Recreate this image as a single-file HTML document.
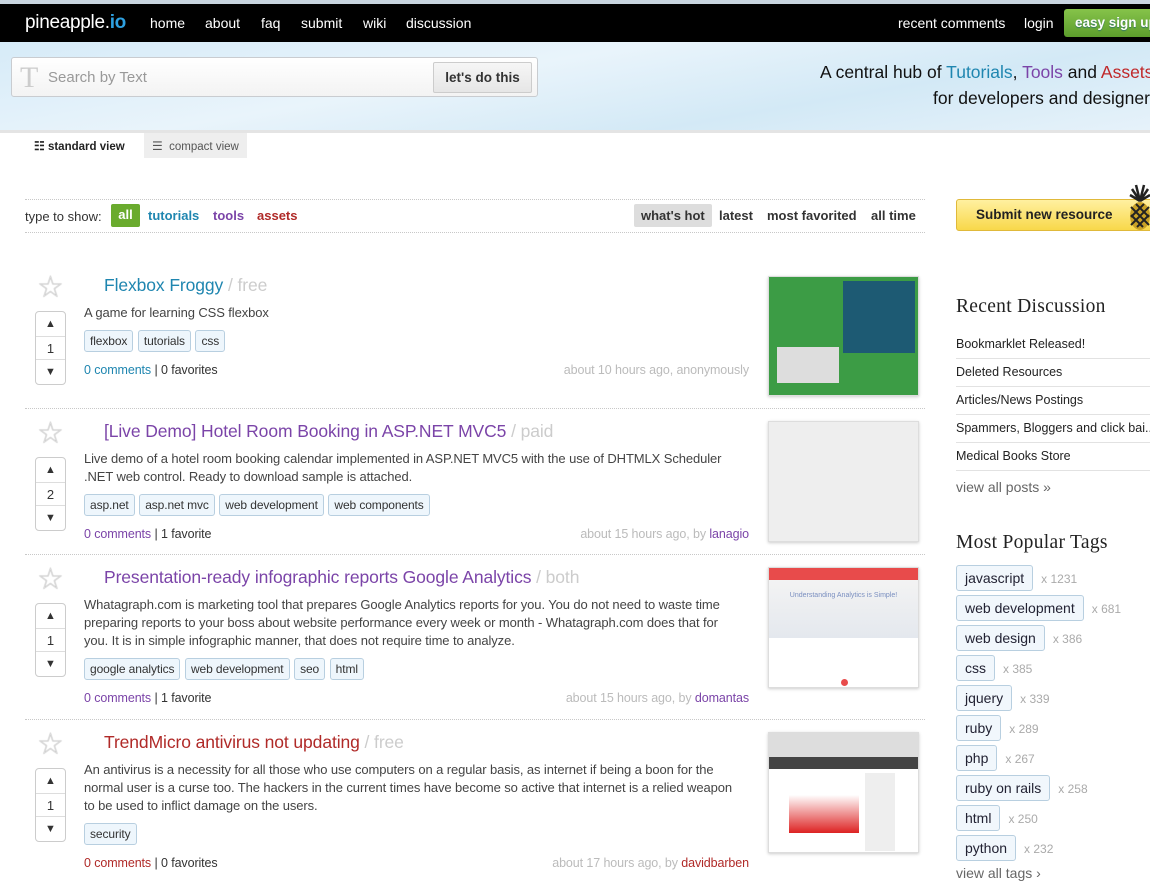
<!DOCTYPE html>
<html><head><meta charset="utf-8"><style>
*{margin:0;padding:0;box-sizing:border-box}
body{width:1150px;height:881px;overflow:hidden;background:#fff;font-family:"Liberation Sans",Arial,sans-serif;color:#333;position:relative}
.abs{position:absolute}
#top{left:0;top:0;width:1150px;height:4px;background:#c9d5e0}
#nav{left:0;top:4px;width:1150px;height:38px;background:#000;color:#fff;font-size:14px}
#nav span{position:absolute;top:11px}
#hero{left:0;top:42px;width:1150px;height:88px;background:linear-gradient(170deg,#d6ebf8 0%,#e9f4fb 40%,#d3e9f6 70%,#e6f2fa 100%)}
#hero2{left:0;top:130px;width:1150px;height:3px;background:#e4e4e4}
#search{left:11px;top:57px;width:527px;height:40px;border:1px solid #c9ccd0;border-radius:3px;background:linear-gradient(#fff,#f3f3f3)}
.dot{height:0;border-top:1px dotted #c8c8c8}
.post{position:absolute;left:0;width:930px}
.star{position:absolute;left:37px;top:4px;font-size:30px;color:#ddd;line-height:26px;text-shadow:0 0 1px #999}
.vote{position:absolute;left:35px;top:40px;width:31px;height:74px;border:1px solid #ccc;border-radius:4px;background:#fff;font-size:13px;text-align:center}
.vote div{height:24px;line-height:24px;font-size:11px}
.vote .n{border-top:1px solid #ddd;border-bottom:1px solid #ddd;font-size:13px;height:24px}
.c{position:absolute;left:84px;top:0;width:665px;font-size:13px;letter-spacing:-0.1px}
.t{padding-left:20px;font-size:17.5px;line-height:28px;letter-spacing:-0.1px}
.t i{font-style:normal;color:#ccc}
.d{margin-top:5px;line-height:18px;color:#444;white-space:nowrap}
.tags{margin-top:8px;height:22px}
.tag{display:inline-block;height:22px;line-height:20px;padding:0 5px;border:1px solid #b8cfe0;border-radius:3px;background:#eef6fc;font-size:12px;color:#333;margin-right:1px}
.m{margin-top:9px;line-height:18px;font-size:12.5px;position:relative}
.m .r{position:absolute;right:0;top:0;color:#bbb}
.th{position:absolute;left:768px;width:151px;border:1px solid #ddd;box-shadow:0 1px 3px #ccc}
.side{left:956px;font-size:12.5px}
.h{font-family:"Liberation Serif",serif;font-size:19.5px;color:#222;letter-spacing:.3px}
.dl{width:194px;height:28px;line-height:27px;border-bottom:1px solid #e2e2e2;white-space:nowrap;overflow:hidden;color:#222}
.pt{height:30px;position:relative}
.pt b{font-weight:normal;display:inline-block;height:26px;line-height:24px;padding:0 8px;border:1px solid #b8cfe0;border-radius:3px;background:#f1f7fc;font-size:14px;color:#223}
.pt span{color:#aaa;font-size:12px;margin-left:8px}
.f{position:absolute;top:208px;font-size:13px;font-weight:bold;color:#333}
</style></head><body>
<div id="top" class="abs"></div>
<div id="nav" class="abs">
<span style="left:25px;top:8px;font-size:19px;letter-spacing:-.3px">pineapple.<b style="color:#2ea0e0">io</b></span>
<span style="left:150px">home</span><span style="left:205px">about</span><span style="left:261px">faq</span><span style="left:301px">submit</span><span style="left:363px">wiki</span><span style="left:406px">discussion</span>
<span style="left:898px">recent comments</span><span style="left:1024px">login</span>
<div class="abs" style="left:1064px;top:5px;width:90px;height:28px;background:linear-gradient(#86c34a,#5c9d2c);border-radius:3px;font-weight:bold;font-size:13.5px;line-height:28px;padding-left:11px;white-space:nowrap;text-shadow:0 1px 1px #376"> easy sign up</div>
</div>
<div id="hero" class="abs"></div><div id="hero2" class="abs"></div>
<div id="search" class="abs">
<div class="abs" style="left:8px;top:3px;font-family:'Liberation Serif',serif;font-size:30px;color:#ccc">T</div>
<div class="abs" style="left:36px;top:11px;font-size:15px;color:#999">Search by Text</div>
<div class="abs" style="left:421px;top:4px;width:99px;height:31px;border:1px solid #ccc;border-radius:2px;background:linear-gradient(#f6f6f6,#e6e6e6);font-size:13.5px;font-weight:bold;color:#333;text-align:center;line-height:30px">let's do this</div>
</div>
<div class="abs" style="left:820px;top:59px;font-size:17.5px;line-height:26px;white-space:nowrap;color:#111">A central hub of <span style="color:#1f86b0">Tutorials</span>, <span style="color:#7b44a8">Tools</span> and <span style="color:#c0282a">Assets</span></div>
<div class="abs" style="left:933px;top:85px;font-size:17.5px;line-height:26px;white-space:nowrap;color:#111">for developers and designers</div>
<div class="abs" style="left:144px;top:133px;width:103px;height:25px;background:#eee"></div>
<div class="abs" style="left:34px;top:139px;font-size:11.5px;font-weight:bold;color:#222"><span style="font-size:12px">☷</span> standard view</div>
<div class="abs" style="left:152px;top:139px;font-size:11.5px;color:#555"><span style="font-size:12px">☰</span>&nbsp; compact view</div>
<div class="abs dot" style="left:25px;top:199px;width:900px"></div>
<div class="abs dot" style="left:25px;top:232px;width:900px"></div>
<div class="abs" style="left:25px;top:209px;font-size:13px;color:#333">type to show:</div>
<div class="abs" style="left:111px;top:204px;width:29px;height:23px;background:#6aab2e;border-radius:2px;color:#fff;font-weight:bold;font-size:13px;text-align:center;line-height:22px">all</div>
<div class="abs" style="left:148px;top:208px;font-size:13px;font-weight:bold;color:#1f86b0">tutorials</div>
<div class="abs" style="left:213px;top:208px;font-size:13px;font-weight:bold;color:#7b44a8">tools</div>
<div class="abs" style="left:257px;top:208px;font-size:13px;font-weight:bold;color:#b02a28">assets</div>
<div class="abs" style="left:634px;top:204px;width:78px;height:23px;background:#ddd;border-radius:2px"></div>
<div class="f" style="left:641px">what's hot</div>
<div class="f" style="left:719px">latest</div>
<div class="f" style="left:767px">most favorited</div>
<div class="f" style="left:871px">all time</div>

<div class="post" style="top:271px">
<div class="star">☆</div>
<div class="vote"><div>▲</div><div class="n">1</div><div>▼</div></div>
<div class="c"><div class="t" style="color:#1f86b0">Flexbox Froggy <i>/ free</i></div>
<div class="d">A game for learning CSS flexbox</div>
<div class="tags"><span class="tag">flexbox</span> <span class="tag">tutorials</span> <span class="tag">css</span></div>
<div class="m"><span style="color:#1f86b0">0 comments</span> | 0 favorites<span class="r">about 10 hours ago, anonymously</span></div></div>
<div class="th" style="top:5px;height:120px;background:#3c9c45;padding:4px"><div style="position:absolute;left:74px;top:4px;width:72px;height:72px;background:#1d5a73"></div><div style="position:absolute;left:8px;top:70px;width:62px;height:36px;background:#ddd"></div></div>
</div>
<div class="abs dot" style="left:25px;top:408px;width:900px"></div>

<div class="post" style="top:417px">
<div class="star">☆</div>
<div class="vote"><div>▲</div><div class="n">2</div><div>▼</div></div>
<div class="c"><div class="t" style="color:#7b44a8">[Live Demo] Hotel Room Booking in ASP.NET MVC5 <i>/ paid</i></div>
<div class="d">Live demo of a hotel room booking calendar implemented in ASP.NET MVC5 with the use of DHTMLX Scheduler<br>.NET web control. Ready to download sample is attached.</div>
<div class="tags"><span class="tag">asp.net</span> <span class="tag">asp.net mvc</span> <span class="tag">web development</span> <span class="tag">web components</span></div>
<div class="m"><span style="color:#7b44a8">0 comments</span> | 1 favorite<span class="r">about 15 hours ago, by <span style="color:#7b44a8">lanagio</span></span></div></div>
<div class="th" style="top:4px;height:121px;background:#eee"></div>
</div>
<div class="abs dot" style="left:25px;top:554px;width:900px"></div>

<div class="post" style="top:563px">
<div class="star">☆</div>
<div class="vote"><div>▲</div><div class="n">1</div><div>▼</div></div>
<div class="c"><div class="t" style="color:#7b44a8">Presentation-ready infographic reports Google Analytics <i>/ both</i></div>
<div class="d">Whatagraph.com is marketing tool that prepares Google Analytics reports for you. You do not need to waste time<br>preparing reports to your boss about website performance every week or month - Whatagraph.com does that for<br>you. It is in simple infographic manner, that does not require time to analyze.</div>
<div class="tags"><span class="tag">google analytics</span> <span class="tag">web development</span> <span class="tag">seo</span> <span class="tag">html</span></div>
<div class="m"><span style="color:#7b44a8">0 comments</span> | 1 favorite<span class="r">about 15 hours ago, by <span style="color:#7b44a8">domantas</span></span></div></div>
<div class="th" style="top:4px;height:121px;background:#fff"><div style="height:12px;background:#e84b4b"></div><div style="height:58px;background:linear-gradient(#f3f3f3,#e4e8ee)"><div style="text-align:center;font-size:7px;color:#7a8fc0;padding-top:12px">Understanding Analytics is Simple!</div></div><div style="position:absolute;left:72px;top:111px;width:7px;height:7px;border-radius:50%;background:#e84b4b"></div></div>
</div>
<div class="abs dot" style="left:25px;top:719px;width:900px"></div>

<div class="post" style="top:728px">
<div class="star">☆</div>
<div class="vote"><div>▲</div><div class="n">1</div><div>▼</div></div>
<div class="c"><div class="t" style="color:#b02a28">TrendMicro antivirus not updating <i>/ free</i></div>
<div class="d">An antivirus is a necessity for all those who use computers on a regular basis, as internet if being a boon for the<br>normal user is a curse too. The hackers in the current times have become so active that internet is a relied weapon<br>to be used to inflict damage on the users.</div>
<div class="tags"><span class="tag">security</span></div>
<div class="m"><span style="color:#b02a28">0 comments</span> | 0 favorites<span class="r">about 17 hours ago, by <span style="color:#b02a28">davidbarben</span></span></div></div>
<div class="th" style="top:4px;height:121px;background:#fff"><div style="height:24px;background:#ddd"></div><div style="height:12px;background:#444"></div><div style="position:absolute;left:20px;top:62px;width:70px;height:38px;background:linear-gradient(#fff,#d22)"></div><div style="position:absolute;left:96px;top:40px;width:30px;height:78px;background:#eee"></div></div>
</div>

<div class="abs" style="left:956px;top:199px;width:200px;height:32px;border:1px solid #e0b93a;border-radius:3px;background:linear-gradient(#fff0a0,#f8d84a);font-weight:bold;font-size:13.5px;line-height:30px;padding-left:19px;color:#222">Submit new resource</div>
<svg class="abs" style="left:1128px;top:183px" width="24" height="48" viewBox="0 0 24 48"><path d="M12 18 L8 2 M12 18 L4 6 M12 18 L16 2 M12 18 L20 6 M12 18 L2 12 M12 18 L22 12" stroke="#222" stroke-width="2.5" fill="none"/><ellipse cx="12" cy="33" rx="10" ry="14" fill="#c9a227"/><path d="M3 24 L21 42 M3 32 L15 44 M8 21 L21 34 M21 24 L3 42 M21 32 L9 44 M16 21 L3 34" stroke="#222" stroke-width="2"/></svg>
<div class="abs side" style="top:296px"><div class="h">Recent Discussion</div>
<div style="margin-top:13px"><div class="dl">Bookmarklet Released!</div><div class="dl">Deleted Resources</div><div class="dl">Articles/News Postings</div><div class="dl">Spammers, Bloggers and click bai...</div><div class="dl">Medical Books Store</div></div>
<div style="margin-top:8px;font-size:14px;color:#666">view all posts »</div></div>
<div class="abs side" style="top:532px"><div class="h">Most Popular Tags</div>
<div style="margin-top:11px">
<div class="pt"><b>javascript</b><span>x 1231</span></div>
<div class="pt"><b>web development</b><span>x 681</span></div>
<div class="pt"><b>web design</b><span>x 386</span></div>
<div class="pt"><b>css</b><span>x 385</span></div>
<div class="pt"><b>jquery</b><span>x 339</span></div>
<div class="pt"><b>ruby</b><span>x 289</span></div>
<div class="pt"><b>php</b><span>x 267</span></div>
<div class="pt"><b>ruby on rails</b><span>x 258</span></div>
<div class="pt"><b>html</b><span>x 250</span></div>
<div class="pt"><b>python</b><span>x 232</span></div>
<div style="font-size:14px;color:#666">view all tags ›</div>
</div></div>
</body></html>
